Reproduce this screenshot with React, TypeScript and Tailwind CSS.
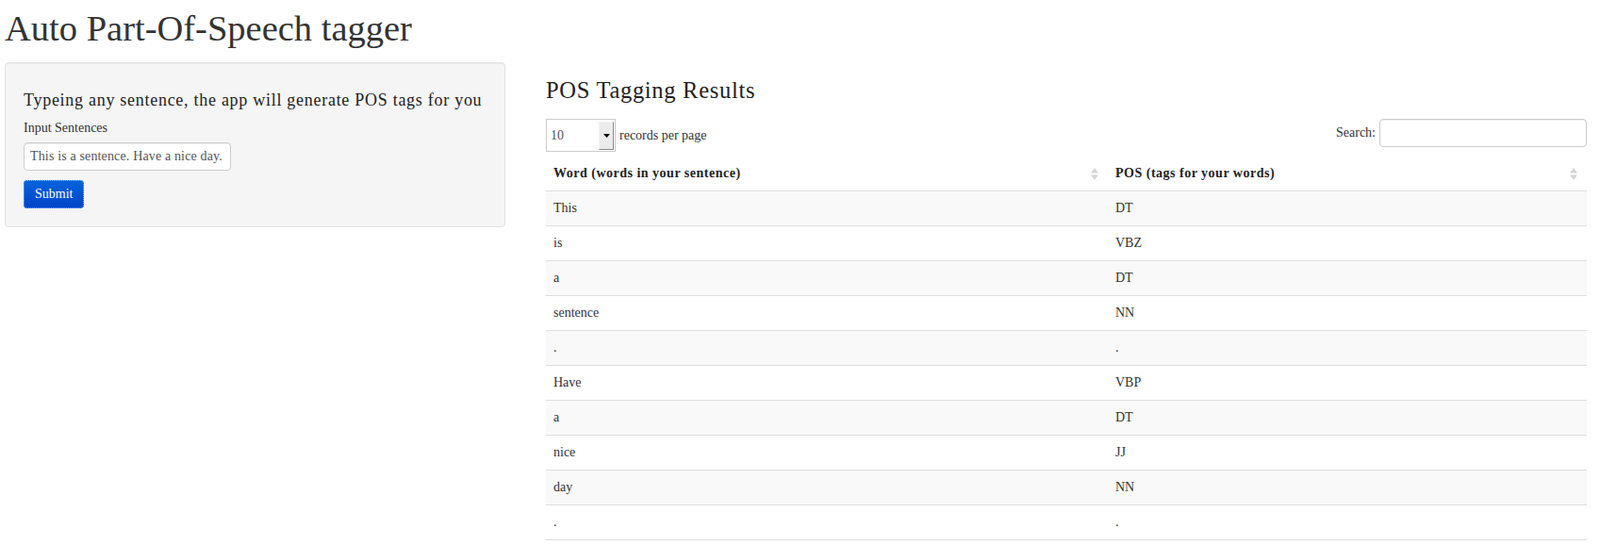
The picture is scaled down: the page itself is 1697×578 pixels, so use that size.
import React from 'react';

const rows: [string, string][] = [
  ['This', 'DT'],
  ['is', 'VBZ'],
  ['a', 'DT'],
  ['sentence', 'NN'],
  ['.', '.'],
  ['Have', 'VBP'],
  ['a', 'DT'],
  ['nice', 'JJ'],
  ['day', 'NN'],
  ['.', '.'],
];

const SortIcon = () => (
  <svg width="8" height="13" viewBox="0 0 8 13" className="shrink-0">
    <path d="M4 0 L8 5.5 L0 5.5 Z" fill="#d4d4d4" />
    <path d="M4 13 L8 7.5 L0 7.5 Z" fill="#d4d4d4" />
  </svg>
);

export default function App() {
  return (
    <div className="min-h-[578px] bg-white px-[5px] font-['Liberation_Serif','Times_New_Roman',serif] text-[14px] leading-5 text-[#333]">
      <h1 className="my-[10px] text-[38.5px] leading-10 font-normal">Auto Part-Of-Speech tagger</h1>

      <div className="flex items-start pt-[6px]">
        {/* sidebar */}
        <div className="w-[531px] shrink-0 rounded-[4px] border border-[#e3e3e3] bg-[#f5f5f5] px-[19px] py-[19px] shadow-[inset_0_1px_1px_rgba(0,0,0,0.05)]">
          <h4 className="my-[10px] whitespace-nowrap text-[18px] leading-5 font-normal tracking-[0.72px] text-[#222]">
            Typeing any sentence, the app will generate POS tags for you
          </h4>
          <label className="mb-[5px] block text-[14px] leading-5">Input Sentences</label>
          <input
            type="text"
            defaultValue="This is a sentence. Have a nice day."
            className="mb-[10px] block h-[30px] w-[220px] rounded-[4px] border border-[#ccc] bg-white px-[6px] py-[4px] text-[14px] leading-5 tracking-[0.15px] text-[#555] shadow-[inset_0_1px_1px_rgba(0,0,0,0.075)] outline-none"
          />
          <button
            type="button"
            className="block h-[30px] rounded-[4px] bg-gradient-to-b from-[#0a63da] to-[#0043c8] px-[12px] text-[14px] leading-5 text-white outline-1 outline-dotted outline-offset-[-1px] outline-[#7db4ff]"
          >
            Submit
          </button>
        </div>

        {/* main */}
        <div className="ml-[43px] w-[1104px] shrink-0">
          <h3 className="my-[10px] text-[24.5px] leading-10 font-normal tracking-[0.7px] text-[#222]">POS Tagging Results</h3>

          <div className="flex items-start justify-between">
            <div className="flex items-center gap-[4px]">
              <div className="relative flex h-[35px] w-[74px] items-center border border-[#ccc] bg-white pl-[4px] text-[#555]">
                <span>10</span>
                <div className="absolute right-[1px] top-[2px] flex h-[30px] w-[16px] items-center justify-center border border-t-[#f4f4f4] border-l-[#f4f4f4] border-r-[#8a8a8a] border-b-[#8a8a8a] bg-[#ececec]">
                  <svg width="7" height="4" viewBox="0 0 7 4">
                    <path d="M0 0 H7 L3.5 4 Z" fill="#000" />
                  </svg>
                </div>
              </div>
              <span>records per page</span>
            </div>
            <div className="flex items-center gap-[4px]">
              <span>Search:</span>
              <input
                type="text"
                className="h-[30px] w-[220px] rounded-[4px] border border-[#ccc] bg-white px-[6px] shadow-[inset_0_1px_1px_rgba(0,0,0,0.075)] outline-none"
              />
            </div>
          </div>

          <table className="mt-[5px] w-full border-collapse">
            <thead>
              <tr>
                <th className="w-[596px] border-b border-[#ddd] p-[8px] text-left font-bold">
                  <div className="flex items-center justify-between pr-[2px]">
                    <span className="tracking-[0.5px] text-[#222]">Word (words in your sentence)</span>
                    <SortIcon />
                  </div>
                </th>
                <th className="border-b border-[#ddd] p-[8px] text-left font-bold">
                  <div className="flex items-center justify-between pr-[2px]">
                    <span className="tracking-[0.5px] text-[#222]">POS (tags for your words)</span>
                    <SortIcon />
                  </div>
                </th>
              </tr>
            </thead>
            <tbody>
              {rows.map(([w, t], i) => (
                <tr key={i} className={i % 2 === 0 ? 'bg-[#f9f9f9]' : 'bg-white'}>
                  <td className="border-b border-[#ddd] p-[8px]">{w}</td>
                  <td className="border-b border-[#ddd] p-[8px]">{t}</td>
                </tr>
              ))}
            </tbody>
          </table>
        </div>
      </div>
    </div>
  );
}
